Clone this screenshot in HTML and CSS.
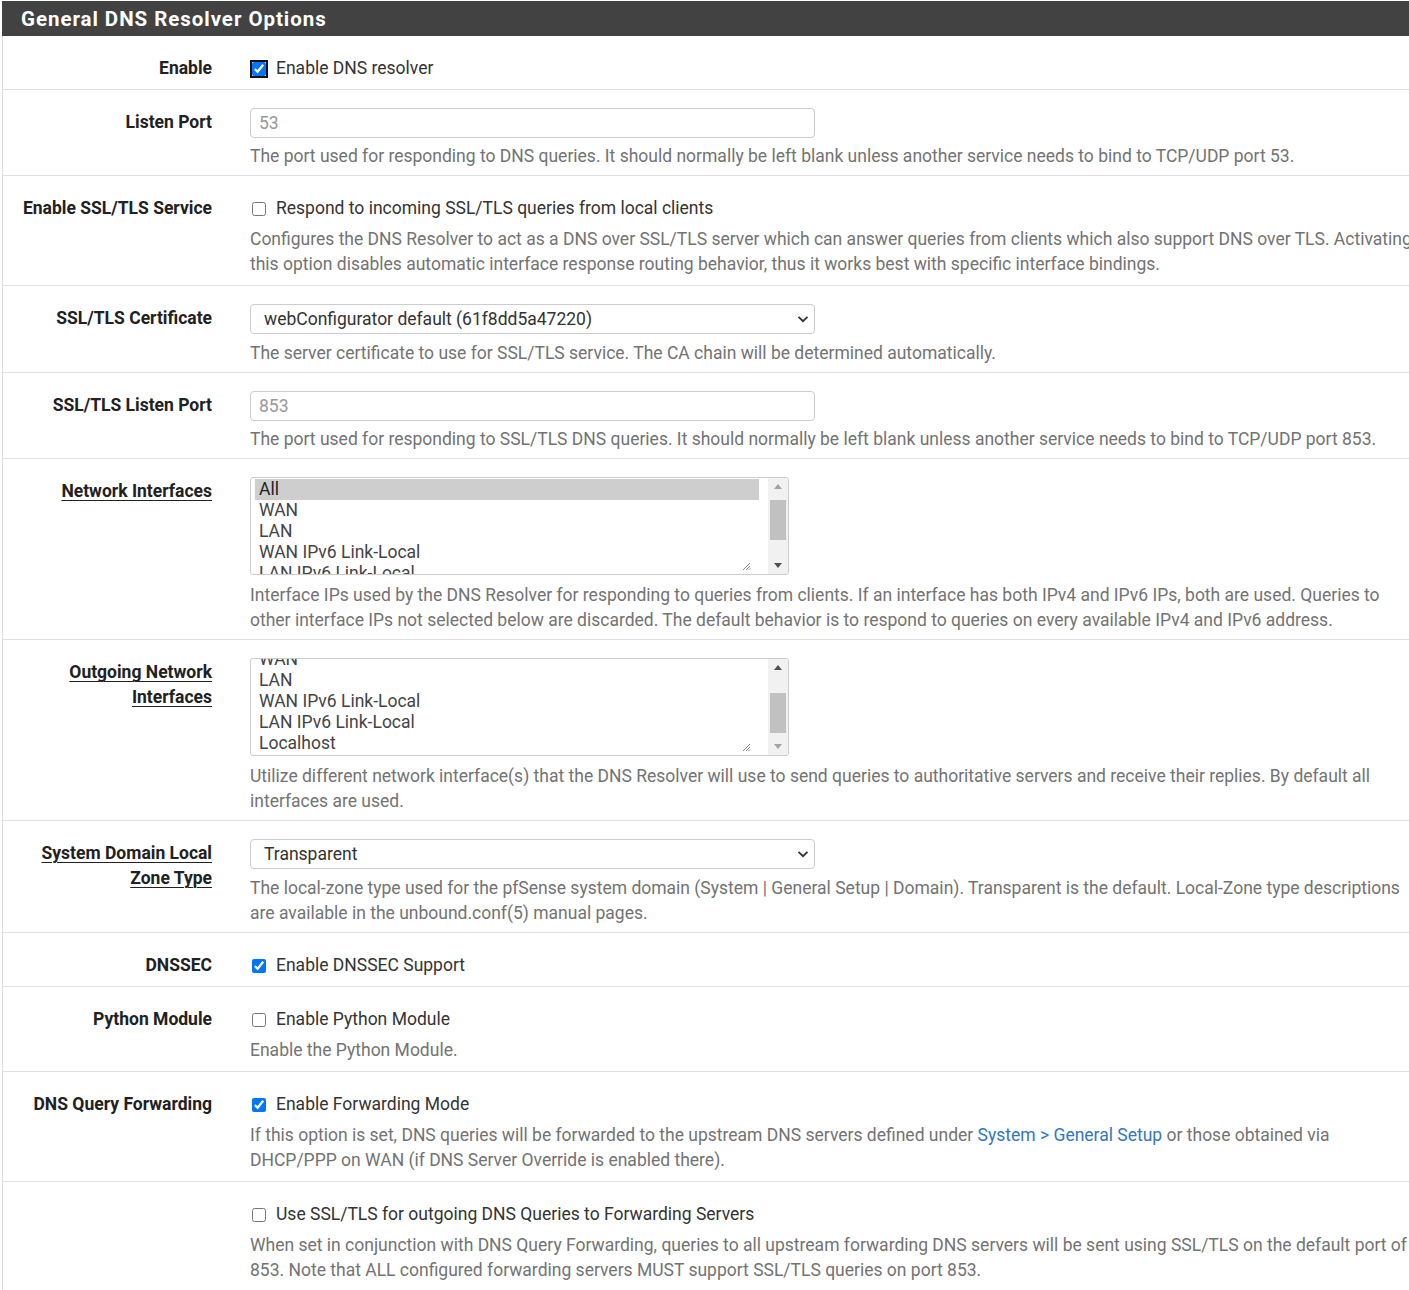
FILE: index.html
```html
<!DOCTYPE html>
<html lang="en">
<head>
<meta charset="utf-8">
<title>General DNS Resolver Options</title>
<link rel="stylesheet" href="styles.css">
</head>
<body>
<div class="panel">
  <div class="panel-heading"><h2 class="panel-title">General DNS Resolver Options</h2></div>
  <div class="panel-body">

    <div class="row chk">
      <div class="lbl">Enable</div>
      <div class="ctl">
        <label class="cb"><input type="checkbox" checked class="focused"><span>Enable DNS resolver</span></label>
      </div>
    </div>

    <div class="row">
      <div class="lbl">Listen Port</div>
      <div class="ctl">
        <input class="text" type="text" placeholder="53">
        <div class="help">The port used for responding to DNS queries. It should normally be left blank unless another service needs to bind to TCP/UDP port 53.</div>
      </div>
    </div>

    <div class="row chk">
      <div class="lbl">Enable SSL/TLS Service</div>
      <div class="ctl">
        <label class="cb"><input type="checkbox"><span>Respond to incoming SSL/TLS queries from local clients</span></label>
        <div class="help">Configures the DNS Resolver to act as a DNS over SSL/TLS server which can answer queries from clients which also support DNS over TLS. Activating this option disables automatic interface response routing behavior, thus it works best with specific interface bindings.</div>
      </div>
    </div>

    <div class="row">
      <div class="lbl">SSL/TLS Certificate</div>
      <div class="ctl">
        <div class="select"><span>webConfigurator default (61f8dd5a47220)</span><svg class="chev" width="12" height="8" viewBox="0 0 12 8"><path d="M1.5 1.8 L6 6.2 L10.5 1.8" fill="none" stroke="#333" stroke-width="1.8"/></svg></div>
        <div class="help">The server certificate to use for SSL/TLS service. The CA chain will be determined automatically.</div>
      </div>
    </div>

    <div class="row">
      <div class="lbl">SSL/TLS Listen Port</div>
      <div class="ctl">
        <input class="text" type="text" placeholder="853">
        <div class="help">The port used for responding to SSL/TLS DNS queries. It should normally be left blank unless another service needs to bind to TCP/UDP port 853.</div>
      </div>
    </div>

    <div class="row">
      <div class="lbl"><a class="lbl-link" href="#">Network Interfaces</a></div>
      <div class="ctl">
        <div class="listbox">
          <div class="opts">
            <div class="opt sel">All</div>
            <div class="opt">WAN</div>
            <div class="opt">LAN</div>
            <div class="opt">WAN IPv6 Link-Local</div>
            <div class="opt">LAN IPv6 Link-Local</div>
            <div class="opt">Localhost</div>
          </div>
          <div class="sb">
            <div class="arrow up off"></div>
            <div class="track"><div class="thumb"></div></div>
            <div class="arrow down"></div>
          </div>
          <svg class="grip" width="9" height="9" viewBox="0 0 9 9"><path d="M8 1 L1 8 M8 4 L4 8 M8 6.5 L6.5 8" stroke="#888" stroke-width="1"/></svg>
        </div>
        <div class="help">Interface IPs used by the DNS Resolver for responding to queries from clients. If an interface has both IPv4 and IPv6 IPs, both are used. Queries to other interface IPs not selected below are discarded. The default behavior is to respond to queries on every available IPv4 and IPv6 address.</div>
      </div>
    </div>

    <div class="row">
      <div class="lbl"><a class="lbl-link" href="#">Outgoing Network Interfaces</a></div>
      <div class="ctl">
        <div class="listbox">
          <div class="opts scrolled">
            <div class="opt">All</div>
            <div class="opt">WAN</div>
            <div class="opt">LAN</div>
            <div class="opt">WAN IPv6 Link-Local</div>
            <div class="opt">LAN IPv6 Link-Local</div>
            <div class="opt">Localhost</div>
          </div>
          <div class="sb">
            <div class="arrow up"></div>
            <div class="track end"><div class="thumb"></div></div>
            <div class="arrow down off"></div>
          </div>
          <svg class="grip" width="9" height="9" viewBox="0 0 9 9"><path d="M8 1 L1 8 M8 4 L4 8 M8 6.5 L6.5 8" stroke="#888" stroke-width="1"/></svg>
        </div>
        <div class="help">Utilize different network interface(s) that the DNS Resolver will use to send queries to authoritative servers and receive their replies. By default all interfaces are used.</div>
      </div>
    </div>

    <div class="row">
      <div class="lbl"><a class="lbl-link" href="#">System Domain Local Zone Type</a></div>
      <div class="ctl">
        <div class="select"><span>Transparent</span><svg class="chev" width="12" height="8" viewBox="0 0 12 8"><path d="M1.5 1.8 L6 6.2 L10.5 1.8" fill="none" stroke="#333" stroke-width="1.8"/></svg></div>
        <div class="help">The local-zone type used for the pfSense system domain (System | General Setup | Domain). Transparent is the default. Local-Zone type descriptions are available in the unbound.conf(5) manual pages.</div>
      </div>
    </div>

    <div class="row chk">
      <div class="lbl">DNSSEC</div>
      <div class="ctl">
        <label class="cb"><input type="checkbox" checked><span>Enable DNSSEC Support</span></label>
      </div>
    </div>

    <div class="row chk">
      <div class="lbl">Python Module</div>
      <div class="ctl">
        <label class="cb"><input type="checkbox"><span>Enable Python Module</span></label>
        <div class="help">Enable the Python Module.</div>
      </div>
    </div>

    <div class="row chk">
      <div class="lbl">DNS Query Forwarding</div>
      <div class="ctl">
        <label class="cb"><input type="checkbox" checked><span>Enable Forwarding Mode</span></label>
        <div class="help">If this option is set, DNS queries will be forwarded to the upstream DNS servers defined under <a href="#">System &gt; General Setup</a> or those obtained via DHCP/PPP on WAN (if DNS Server Override is enabled there).</div>
      </div>
    </div>

    <div class="row chk">
      <div class="lbl"></div>
      <div class="ctl">
        <label class="cb"><input type="checkbox"><span>Use SSL/TLS for outgoing DNS Queries to Forwarding Servers</span></label>
        <div class="help">When set in conjunction with DNS Query Forwarding, queries to all upstream forwarding DNS servers will be sent using SSL/TLS on the default port of 853. Note that ALL configured forwarding servers MUST support SSL/TLS queries on port 853.</div>
      </div>
    </div>

  </div>
</div>
</body>
</html>
```

FILE: styles.css
```css
html, body {
  margin: 0;
  padding: 0;
  background: #fff;
  overflow-x: hidden;
}

body {
  font-family: Roboto, "Liberation Sans", Arial, sans-serif;
  font-size: 17.5px;
  line-height: 25px;
  color: #333;
}

.panel {
  width: 1460px;
  margin: 1px 0 0 2px;
  border-left: 1px solid #ddd;
}

.panel-heading {
  background: #424242;
  height: 35px;
  margin-left: -1px;
  padding-left: 19px;
  display: flex;
  align-items: center;
}

.panel-title {
  margin: 0;
  color: #fff;
  font-size: 20.5px;
  font-weight: 700;
  letter-spacing: 0.95px;
  line-height: 24px;
}

.row {
  display: grid;
  grid-template-columns: 209px 1170px;
  column-gap: 38px;
  padding: 18px 0 6px;
  border-bottom: 1px solid #e0e0e0;
}

.row.chk {
  padding-bottom: 8px;
}

.lbl {
  text-align: right;
  font-weight: 700;
  color: #212121;
  padding-top: 2px;
}

.lbl-link {
  color: #212121;
  text-decoration: underline;
  text-underline-offset: 3px;
  text-decoration-thickness: 1px;
}

.ctl {
  min-width: 0;
}

.cb {
  display: flex;
  align-items: center;
  height: 25px;
  margin-top: 2px;
  color: #333;
}

.cb input {
  width: 14px;
  height: 14px;
  margin: 0 10px 0 2px;
  flex: none;
}

.cb input.focused {
  outline: 2px solid #111;
  outline-offset: 0;
  border-radius: 3px;
}

.help {
  margin-top: 6px;
  color: #737373;
}

.select + .help {
  margin-top: 7px;
}

.listbox + .help {
  margin-top: 8px;
}

.help a {
  color: #3377c2;
  text-decoration: none;
}

.text {
  display: block;
  box-sizing: border-box;
  width: 565px;
  height: 30px;
  margin: 0;
  padding: 0 8px;
  border: 1px solid #ccc;
  border-radius: 4px;
  font-family: inherit;
  font-size: 17.5px;
  color: #555;
  background: #fff;
}

.text::placeholder {
  color: #999;
}

.select {
  box-sizing: border-box;
  width: 565px;
  height: 30px;
  border: 1px solid #ccc;
  border-radius: 4px;
  padding: 0 5px 0 13px;
  display: flex;
  align-items: center;
  justify-content: space-between;
  color: #333;
}

.chev {
  display: block;
}

.listbox {
  position: relative;
  box-sizing: border-box;
  width: 539px;
  height: 98px;
  border: 1px solid #ccc;
  border-radius: 3px;
  display: flex;
  overflow: hidden;
}

.opts {
  flex: 1;
  padding: 1px 9px 0 4px;
  line-height: 21px;
  color: #444;
}

.opts.scrolled {
  margin-top: -32px;
}

.opt {
  padding-left: 4px;
  white-space: nowrap;
}

.opt.sel {
  background: #cecece;
  color: #222;
}

.sb {
  width: 20px;
  flex: none;
  background: #f1f1f1;
  display: flex;
  flex-direction: column;
}

.arrow {
  height: 17px;
  display: flex;
  align-items: center;
  justify-content: center;
}

.arrow::before {
  content: "";
  width: 0;
  height: 0;
  border-left: 4px solid transparent;
  border-right: 4px solid transparent;
}

.arrow.up::before {
  border-bottom: 5px solid #505050;
}

.arrow.down::before {
  border-top: 5px solid #505050;
}

.arrow.up.off::before {
  border-bottom-color: #a3a3a3;
}

.arrow.down.off::before {
  border-top-color: #a3a3a3;
}

.track {
  flex: 1;
  display: flex;
  flex-direction: column;
  padding: 5px 2px 0;
}

.track.end {
  justify-content: flex-end;
  padding: 0 2px 5px;
}

.thumb {
  height: 40px;
  background: #c1c1c1;
}

.grip {
  position: absolute;
  right: 37px;
  bottom: 3px;
}
```
